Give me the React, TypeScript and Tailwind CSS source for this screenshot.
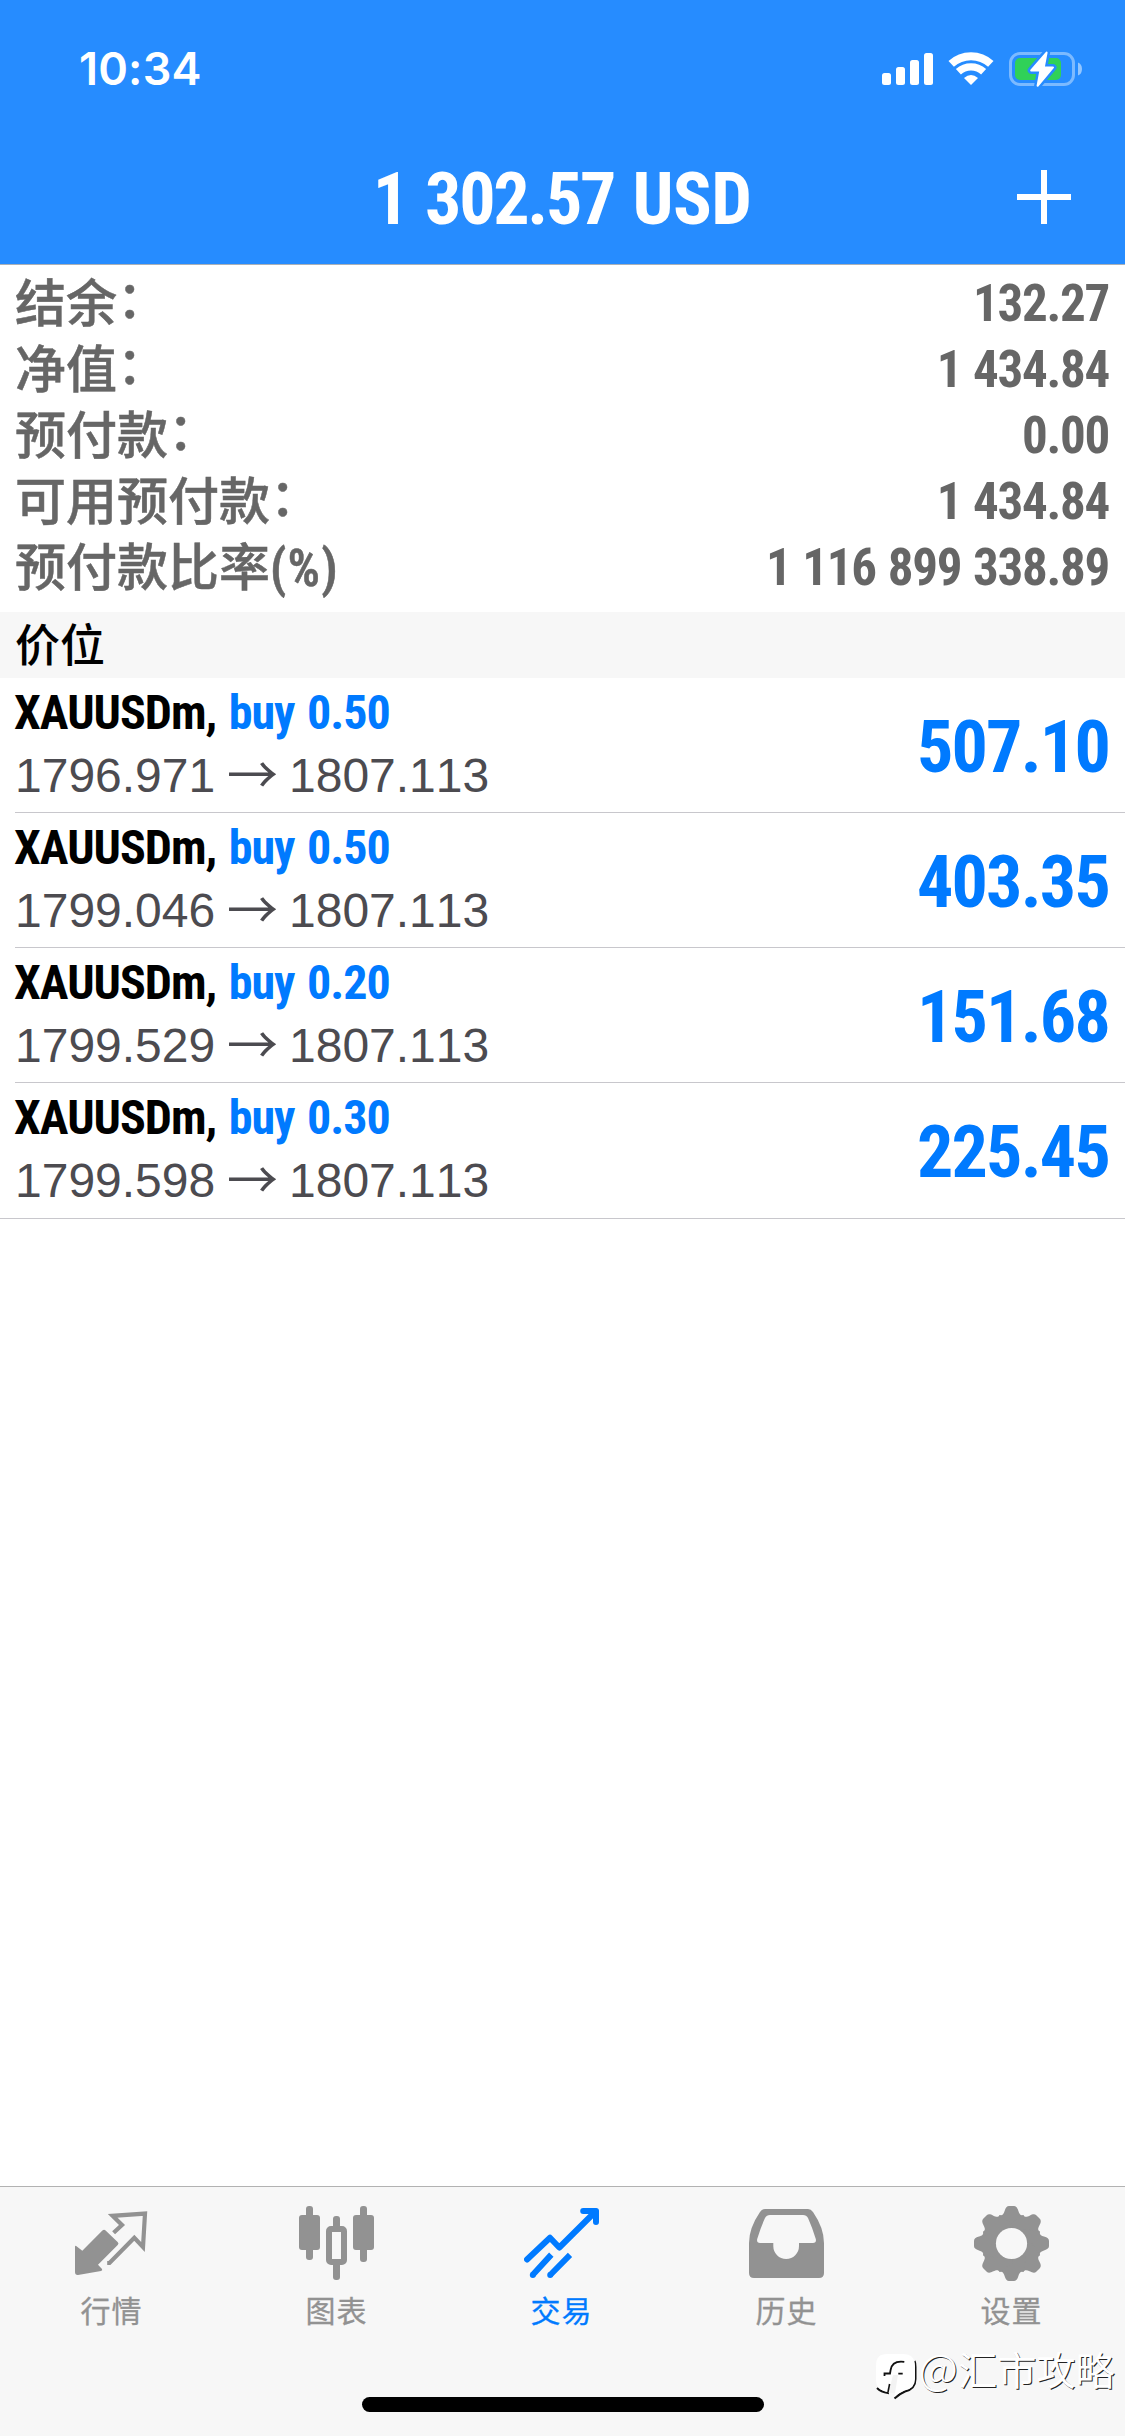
import type { ReactNode } from "react";
import { clsx } from "clsx";

type Position = {
  symbol: string;
  side: string;
  open: string;
  current: string;
  profit: string;
};

const summary = [
  { label: "结余", colon: true, value: "132.27" },
  { label: "净值", colon: true, value: "1 434.84" },
  { label: "预付款", colon: true, value: "0.00" },
  { label: "可用预付款", colon: true, value: "1 434.84" },
  { label: "预付款比率", colon: false, value: "1 116 899 338.89" },
];

const positions: Position[] = [
  { symbol: "XAUUSDm,", side: "buy 0.50", open: "1796.971", current: "1807.113", profit: "507.10" },
  { symbol: "XAUUSDm,", side: "buy 0.50", open: "1799.046", current: "1807.113", profit: "403.35" },
  { symbol: "XAUUSDm,", side: "buy 0.20", open: "1799.529", current: "1807.113", profit: "151.68" },
  { symbol: "XAUUSDm,", side: "buy 0.30", open: "1799.598", current: "1807.113", profit: "225.45" },
];

function StatusIcons() {
  return (
    <svg width="200" height="36" viewBox="882 51 200 36" fill="none">
      <g fill="#fff">
        <rect x="882" y="73" width="9" height="12" rx="2.5" />
        <rect x="896" y="67" width="9" height="18" rx="2.5" />
        <rect x="910" y="60" width="9" height="25" rx="2.5" />
        <rect x="924" y="53" width="9" height="32" rx="2.5" />
      </g>
      <g stroke="#fff">
        <path d="M951.2 63.9A29.3 29.3 0 0 1 990.8 63.9" strokeWidth="8" />
        <path d="M958.4 71.8A18.6 18.6 0 0 1 983.6 71.8" strokeWidth="7.4" />
      </g>
      <path d="M971 85L964 78Q971 72 978 78Z" fill="#fff" />
      <rect x="1010.5" y="53.5" width="63" height="31" rx="9.5" stroke="#fff" strokeOpacity=".4" strokeWidth="3" />
      <path d="M1078 62.5Q1082 64 1082 69T1078 75.5Z" fill="#fff" fillOpacity=".5" />
      <rect x="1015" y="58" width="46" height="22" rx="5" fill="#30d158" />
      <path
        d="M1046.6 52.6L1031.2 70.4H1040.4L1037.6 85.8L1053 67.4H1043.8Z"
        stroke="#268cff"
        strokeWidth="7"
        strokeLinejoin="round"
      />
      <path
        d="M1046.6 52.6L1031.2 70.4H1040.4L1037.6 85.8L1053 67.4H1043.8Z"
        fill="#fff"
        stroke="#fff"
        strokeWidth="2"
        strokeLinejoin="round"
      />
    </svg>
  );
}

function TabIcon({ children }: { children: ReactNode }) {
  return (
    <svg width="75" height="75" viewBox="0 0 75 75" fill="none">
      {children}
    </svg>
  );
}

function QuotesIcon() {
  return (
    <TabIcon>
      <path
        d="M1 40.5Q1.3 39.2 2.5 40.2L8.3 44.7L28.4 24.6Q30 23 31.6 24.5L43.6 36Q45.3 37.5 43.7 39.1L24 58.7L28 63Q28.8 64.4 27 64.9L4 69Q1 69.2 1 66Z"
        fill="currentColor"
      />
      <path
        d="M39.6 26.8L48 19L38.6 9.8L71 7.6L69 41L60.3 31.8L35.5 57H33.2"
        stroke="currentColor"
        strokeWidth="4.2"
      />
    </TabIcon>
  );
}

function ChartIcon() {
  return (
    <TabIcon>
      <g fill="currentColor">
        <rect x="7" y="0" width="7" height="54" rx="3" />
        <rect x="0" y="9" width="21" height="35" rx="3" />
        <rect x="61" y="0" width="7" height="56" rx="3" />
        <rect x="54" y="9" width="21" height="35" rx="3" />
        <rect x="34" y="10" width="7" height="14" rx="3" />
        <rect x="34" y="55" width="7" height="19" rx="3" />
      </g>
      <rect x="30" y="23" width="15" height="33" rx="2" stroke="currentColor" strokeWidth="6" />
    </TabIcon>
  );
}

function TradeIcon() {
  return (
    <TabIcon>
      <g stroke="currentColor" strokeWidth="6">
        <path d="M3 53.5L26 31.7L35.3 41.5L71.5 5.5" strokeLinecap="round" strokeLinejoin="round" />
        <path d="M59.2 5H72V16" strokeLinecap="round" strokeLinejoin="round" />
        <path d="M8.6 69L27.3 48.6M26.2 69L46 48.9" />
      </g>
      <circle cx="8.8" cy="69" r="3" fill="currentColor" />
      <circle cx="26.2" cy="69" r="3" fill="currentColor" />
    </TabIcon>
  );
}

function HistoryIcon() {
  return (
    <TabIcon>
      <path
        fillRule="evenodd"
        fill="currentColor"
        d="M16 3H59Q62 3 64 6Q75 22 75 37V67Q75 72 70 72H5Q0 72 0 67V37Q0 22 11 6Q13 3 16 3ZM21 9Q17.5 9 16 12Q11.5 22 8.2 33Q7.4 37 11 37H24.3V40A12.8 13 0 0 0 50 40V37H64Q67.6 37 66.8 33Q63.5 22 59 12Q57.5 9 54 9Z"
      />
    </TabIcon>
  );
}

function SettingsIcon() {
  return (
    <TabIcon>
      {[0, 45, 90, 135, 180, 225, 270, 315].map((angle) => (
        <path
          key={angle}
          transform={`rotate(${angle} 37.5 37.5)`}
          fill="currentColor"
          d="M25.7 9C28.6 9.8 29.6 8 30.6 5C31.6 1.5 33 0 35 0H40C42 0 43.4 1.5 44.4 5C45.4 8 46.4 9.8 49.3 9L52 24L37.5 42L23 24Z"
        />
      ))}
      <circle cx="37.5" cy="37.5" r="15.6" fill="#f7f7f7" />
    </TabIcon>
  );
}

const tabs = [
  { label: "行情", icon: <QuotesIcon />, active: false },
  { label: "图表", icon: <ChartIcon />, active: false },
  { label: "交易", icon: <TradeIcon />, active: true },
  { label: "历史", icon: <HistoryIcon />, active: false },
  { label: "设置", icon: <SettingsIcon />, active: false },
];

function Header() {
  return (
    <header className="h-[265px] border-b border-[#a9b0b8] bg-[#268cff] text-white">
      <div className="flex h-[132px] items-center justify-between pt-[6px] pr-[43px] pl-[79px]">
        <time className="font-['Inter',sans-serif] text-[45px] leading-[54px] font-semibold tracking-[0.2px]">
          10:34
        </time>
        <StatusIcons />
      </div>
      <div className="grid h-[132px] grid-cols-[1fr_auto_1fr] items-center">
        <span />
        <h1 className="-ml-px pt-[3px] text-[72px] leading-[80px] font-bold tracking-[-2.3px] [word-spacing:4px] whitespace-nowrap">
          1 302.57 <span className="tracking-[-0.6px]">USD</span>
        </h1>
        <button type="button" aria-label="add" className="mr-[54px] -mt-[2px] justify-self-end">
          <svg width="54" height="54" viewBox="0 0 54 54" fill="#fff">
            <path d="M24 0h6v24h24v6H30v24h-6V30H0v-6h24z" />
          </svg>
        </button>
      </div>
    </header>
  );
}

function Summary() {
  return (
    <dl className="pt-[6px] pr-[16px] pb-[11px] pl-[15px] text-[51px] leading-[66px] text-[#666]">
      {summary.map((row) => (
        <div key={row.label} className="flex h-[66px] justify-between">
          <dt className="pt-px font-medium [-webkit-text-stroke:0.5px]">
            {row.label}
            {row.colon ? (
              <span className="align-[4px] leading-none">：</span>
            ) : (
              <span className="font-semibold tracking-[1.2px]">(%)</span>
            )}
          </dt>
          <dd className="font-bold tracking-[-1.3px] [word-spacing:1.5px]">{row.value}</dd>
        </div>
      ))}
    </dl>
  );
}

function PositionRow({ position, last }: { position: Position; last: boolean }) {
  return (
    <li
      className={clsx(
        "flex justify-between border-b border-[#c8c7cc] pr-[16px]",
        last ? "h-[136px] pl-[15px]" : "ml-[15px] h-[135px]"
      )}
    >
      <div className="flex flex-col gap-[3px] pt-[5px]">
        <p className="-ml-px text-[48px] leading-[60px] font-bold tracking-[-1px] [word-spacing:2.4px] text-black">
          {position.symbol} <span className="text-[#007aff]">{position.side}</span>
        </p>
        <p className="flex font-['Liberation_Sans',sans-serif] text-[48px] leading-[60px] text-[#4c4b50] [font-kerning:none]">
          <span className="w-[212px]">{position.open}</span>
          <span className="w-[62px] font-['Noto_Sans_CJK_SC',sans-serif] text-[51px] leading-[52px]">→</span>
          <span>{position.current}</span>
        </p>
      </div>
      <p className="pt-[3px] text-[72px] leading-[134px] font-bold tracking-[-1.8px] text-[#007aff]">
        {position.profit}
      </p>
    </li>
  );
}

function Watermark() {
  return (
    <div className="absolute right-[10px] bottom-[36px] flex items-center gap-[2px] text-white">
      <svg className="mt-[16px]" width="42" height="48" viewBox="0 0 42 48" fill="none">
        <path d="M39.6 9Q40.5 11 40.5 15V27Q40.5 37 30 39.5Q24 42 19.5 46.5" stroke="#111" strokeWidth="2" />
        <path d="M2 36Q6 40 13 41L14 32" stroke="#111" strokeWidth="2" />
        <path d="M12 2H28Q40 2 40 14V27Q40 37 29 38.5Q23 41 19.5 45L20 40H13Q1 38 1 28V13Q1 2 12 2Z" fill="#fff" />
        <path d="M18 23L13.5 41H20L23 23Z" fill="#f3f3f3" />
        <path d="M29.3 9.8C20 8.5 16.5 12 15.6 18L15 21.5H9.5V24M23.3 21.7H27.7" stroke="#111" strokeWidth="1.8" />
        <path d="M14.6 32L13 40" stroke="#111" strokeWidth="1.6" />
      </svg>
      <span className="font-['Noto_Sans_CJK_SC',sans-serif] text-[39px] leading-[48px] tracking-[0.2px] [text-shadow:1px_1px_0.5px_#222]">
        <span className="text-[43px] leading-none font-light">@</span>汇市攻略
      </span>
    </div>
  );
}

function TabBar() {
  return (
    <nav className="relative h-[250px] border-t border-[#b2b2b2] bg-[#f7f7f7]">
      <ul className="-ml-px grid w-[1125px] grid-cols-5 pt-[19px]">
        {tabs.map((tab) => (
          <li
            key={tab.label}
            className={clsx("flex flex-col items-center", tab.active ? "text-[#007aff]" : "text-[#929292]")}
          >
            {tab.icon}
            <span className="mt-[10px] text-[30px] leading-[42px] tracking-[1px] [-webkit-text-stroke:0.3px]">
              {tab.label}
            </span>
          </li>
        ))}
      </ul>
      <Watermark />
      <div className="mx-auto mt-[64px] h-[15px] w-[402px] rounded-full bg-black" />
    </nav>
  );
}

export default function App() {
  return (
    <div className="flex h-[2436px] w-[1125px] flex-col bg-white font-['Roboto_Condensed','Noto_Sans_CJK_SC',sans-serif]">
      <Header />
      <main className="flex-1">
        <Summary />
        <h2 className="h-[66px] bg-[#f7f7f7] px-[15px] pt-[2px] text-[45px] leading-[66px] font-medium text-black">
          价位
        </h2>
        <ul>
          {positions.map((p, i) => (
            <PositionRow key={p.open} position={p} last={i === positions.length - 1} />
          ))}
        </ul>
      </main>
      <TabBar />
    </div>
  );
}
